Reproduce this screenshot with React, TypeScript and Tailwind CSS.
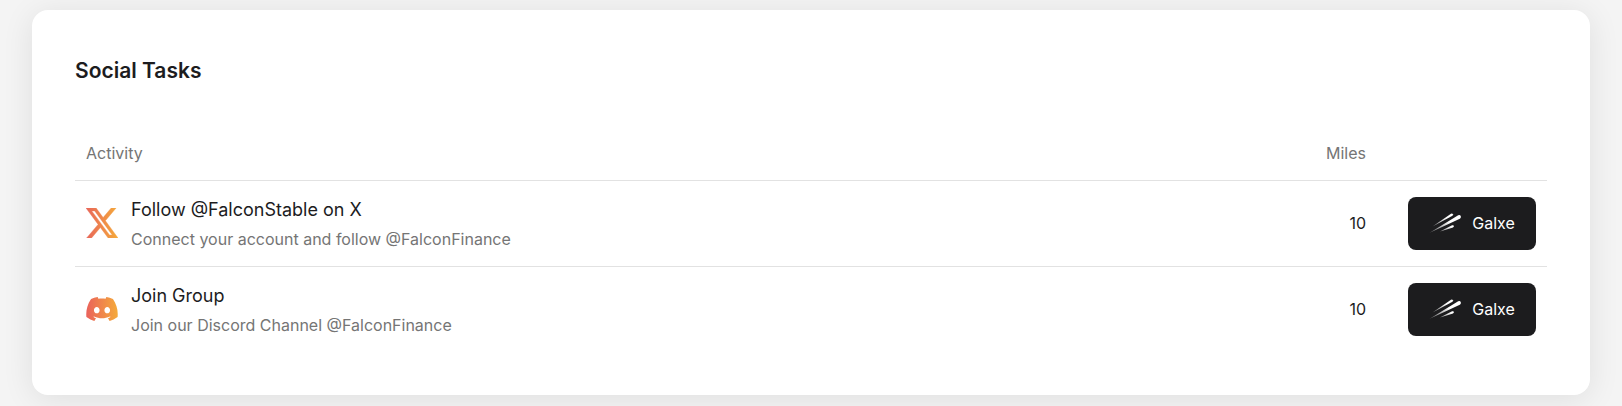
import type { ReactNode } from "react";

function XIcon() {
  return (
    <svg viewBox="0 1.15 24 21.7" className="h-[30px] w-8 shrink-0" preserveAspectRatio="none" aria-hidden="true">
      <defs>
        <linearGradient id="x-fill" x1="0" y1="0" x2="1" y2="0">
          <stop offset="0" stopColor="#e8665a" />
          <stop offset="1" stopColor="#f5aa3a" />
        </linearGradient>
      </defs>
      <path
        fill="url(#x-fill)"
        stroke="url(#x-fill)"
        strokeWidth="0.3"
        d="M18.901 1.153h3.68l-8.04 9.19L24 22.846h-7.406l-5.8-7.584-6.638 7.584H.474l8.6-9.83L0 1.154h7.594l5.243 6.932ZM17.61 20.644h2.039L6.486 3.24H4.298Z"
      />
    </svg>
  );
}

function DiscordIcon() {
  return (
    <svg viewBox="0 2.855 24 18.29" className="h-6 w-8 shrink-0" aria-hidden="true">
      <defs>
        <linearGradient id="discord-fill" x1="0" y1="0" x2="1" y2="0">
          <stop offset="0" stopColor="#ea625c" />
          <stop offset="1" stopColor="#f5aa3a" />
        </linearGradient>
      </defs>
      <path
        fill="url(#discord-fill)"
        d="M20.317 4.3698a19.7913 19.7913 0 00-4.8851-1.5152.0741.0741 0 00-.0785.0371c-.211.3753-.4447.8648-.6083 1.2495-1.8447-.2762-3.68-.2762-5.4868 0-.1636-.3933-.4058-.8742-.6177-1.2495a.077.077 0 00-.0785-.037 19.7363 19.7363 0 00-4.8852 1.515.0699.0699 0 00-.0321.0277C.5334 9.0458-.319 13.5799.0992 18.0578a.0824.0824 0 00.0312.0561c2.0528 1.5076 4.0413 2.4228 5.9929 3.0294a.0777.0777 0 00.0842-.0276c.4616-.6304.8731-1.2952 1.226-1.9942a.076.076 0 00-.0416-.1057c-.6528-.2476-1.2743-.5495-1.8722-.8923a.077.077 0 01-.0076-.1277c.1258-.0943.2517-.1923.3718-.2914a.0743.0743 0 01.0776-.0105c3.9278 1.7933 8.18 1.7933 12.0614 0a.0739.0739 0 01.0785.0095c.1202.099.246.1981.3728.2924a.077.077 0 01-.0066.1276 12.2986 12.2986 0 01-1.873.8914.0766.0766 0 00-.0407.1067c.3604.698.7719 1.3628 1.225 1.9932a.076.076 0 00.0842.0286c1.961-.6067 3.9495-1.5219 6.0023-3.0294a.077.077 0 00.0313-.0552c.5004-5.177-.8382-9.6739-3.5485-13.6604a.061.061 0 00-.0312-.0286zM8.02 15.3312c-1.1825 0-2.1569-1.0857-2.1569-2.419 0-1.3332.9555-2.4189 2.157-2.4189 1.2108 0 2.1757 1.0952 2.1568 2.419 0 1.3332-.9555 2.4189-2.1569 2.4189zm7.9748 0c-1.1825 0-2.1569-1.0857-2.1569-2.419 0-1.3332.9554-2.4189 2.1569-2.4189 1.2108 0 2.1757 1.0952 2.1568 2.419 0 1.3332-.946 2.4189-2.1568 2.4189Z"
      />
    </svg>
  );
}

function GalxeIcon() {
  return (
    <svg viewBox="0 0 32 20" className="h-5 w-8 shrink-0" aria-hidden="true">
      <defs>
        <linearGradient id="galxe-fill" gradientUnits="userSpaceOnUse" x1="0" y1="20" x2="20" y2="8">
          <stop offset="0" stopColor="#fff" stopOpacity="0.25" />
          <stop offset="1" stopColor="#fff" />
        </linearGradient>
      </defs>
      <g fill="url(#galxe-fill)">
        <path d="M3.5 13.4 22 .7Q23.400.2 23.900 1.200T23 3Z" />
        <path d="M.2 20 29.200 2.300Q31.100 1.600 31.700 3.100T30.800 5.700Z" />
        <path d="M11 18.600 23.100 12.200Q24.500 11.900 24.900 12.800T24 14.400Z" />
      </g>
    </svg>
  );
}

type Task = { title: string; detail: string; miles: number; icon: ReactNode };

const tasks: Task[] = [
  {
    title: "Follow @FalconStable on X",
    detail: "Connect your account and follow @FalconFinance",
    miles: 10,
    icon: <XIcon />,
  },
  {
    title: "Join Group",
    detail: "Join our Discord Channel @FalconFinance",
    miles: 10,
    icon: <DiscordIcon />,
  },
];

export default function App() {
  return (
    <main className="min-h-screen bg-[#f4f4f4] px-8 pt-2.5 pb-3 font-['Inter','Liberation_Sans',sans-serif] text-[#1c1c1e]">
      <section className="rounded-2xl bg-white px-[43px] pt-[45px] pb-[43px] shadow-[0_4px_32px_rgba(0,0,0,0.09)]">
        <h2 className="text-[21px] leading-8 font-semibold">Social Tasks</h2>
        <table className="mt-10 w-full border-collapse">
          <thead>
            <tr className="h-[53px] border-b border-[#e2e2e2] text-[#757575]">
              <th className="px-[11px] text-left text-base font-normal">Activity</th>
              <th className="px-[21px] text-right text-base font-normal">Miles</th>
              <th className="w-[160px]" aria-label="Action" />
            </tr>
          </thead>
          <tbody>
            {tasks.map((task) => (
              <tr key={task.title} className="border-b border-[#e2e2e2] last:border-b-0">
                <td className="px-[11px]">
                  <div className="flex items-center gap-[13px]">
                    {task.icon}
                    <div>
                      <p className="text-lg leading-8">{task.title}</p>
                      <p className="text-base leading-[26px] text-[#757575]">{task.detail}</p>
                    </div>
                  </div>
                </td>
                <td className="px-[21px] text-right text-base">{task.miles}</td>
                <td className="py-4 pr-[11px]">
                  <button
                    type="button"
                    className="ml-auto flex h-[53px] w-32 items-center justify-center gap-[11px] rounded-lg bg-[#1c1c1e] text-base text-white"
                  >
                    <GalxeIcon />
                    Galxe
                  </button>
                </td>
              </tr>
            ))}
          </tbody>
        </table>
      </section>
    </main>
  );
}
